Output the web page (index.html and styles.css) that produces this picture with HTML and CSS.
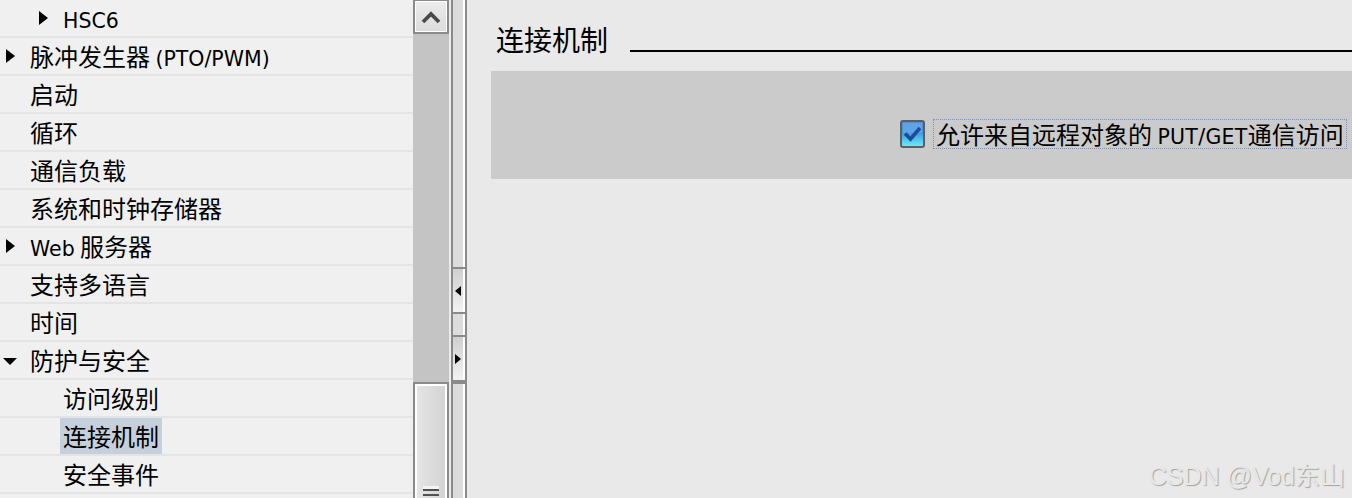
FILE: index.html
```html
<!DOCTYPE html>
<html lang="zh-CN">
<head>
<meta charset="utf-8">
<title>连接机制</title>
<link rel="stylesheet" href="styles.css">
</head>
<body>
<div class="app">
  <div class="tree">
    <div class="row l2"><span class="tw"><i class="arr-r"></i></span><span class="label"><span class="lat">HSC6</span></span></div>
    <div class="row l1"><span class="tw"><i class="arr-r"></i></span><span class="label">脉冲发生器 <span class="lat">(PTO/PWM)</span></span></div>
    <div class="row l1"><span class="tw"></span><span class="label">启动</span></div>
    <div class="row l1"><span class="tw"></span><span class="label">循环</span></div>
    <div class="row l1"><span class="tw"></span><span class="label">通信负载</span></div>
    <div class="row l1"><span class="tw"></span><span class="label">系统和时钟存储器</span></div>
    <div class="row l1"><span class="tw"><i class="arr-r"></i></span><span class="label"><span class="lat">Web</span> 服务器</span></div>
    <div class="row l1"><span class="tw"></span><span class="label">支持多语言</span></div>
    <div class="row l1"><span class="tw"></span><span class="label">时间</span></div>
    <div class="row l1"><span class="tw"><i class="arr-d"></i></span><span class="label">防护与安全</span></div>
    <div class="row l2"><span class="tw"></span><span class="label">访问级别</span></div>
    <div class="row l2"><span class="tw"></span><span class="label selected">连接机制</span></div>
    <div class="row l2"><span class="tw"></span><span class="label">安全事件</span></div>
  </div>

  <div class="vscroll">
    <div class="sb-up">
      <svg width="20" height="14" viewBox="0 0 20 14"><path d="M2 12 L10 4 L18 12" fill="none" stroke="#4a4a4a" stroke-width="3.8"/></svg>
    </div>
    <div class="sb-track"></div>
    <div class="sb-thumb"><span class="grip"></span></div>
  </div>

  <div class="gap"></div>

  <div class="splitter">
    <div class="sp-top"></div>
    <div class="sp-btn"><i class="arr-l"></i></div>
    <div class="sp-mid"></div>
    <div class="sp-btn"><i class="arr-r small"></i></div>
    <div class="sp-rest"></div>
  </div>

  <div class="content">
    <div class="heading">
      <span class="heading-title">连接机制</span>
      <span class="heading-rule"></span>
    </div>
    <div class="box">
      <div class="check-row">
        <svg class="checkbox" width="25" height="28" viewBox="0 0 25 28">
          <defs>
            <linearGradient id="cbg" x1="0" y1="0" x2="0" y2="1">
              <stop offset="0" stop-color="#4f8fdc"/>
              <stop offset="0.45" stop-color="#3f98e2"/>
              <stop offset="1" stop-color="#6cf0fb"/>
            </linearGradient>
          </defs>
          <rect x="1" y="1" width="23" height="26" rx="2" fill="url(#cbg)" stroke="#5e5e5e" stroke-width="2"/>
          <rect x="3" y="3" width="19" height="10" fill="#8ec0ee" opacity="0.35"/>
          <path d="M5 13.5 L10.5 19 L20 8" fill="none" stroke="#1b4d96" stroke-width="3.6"/>
        </svg>
        <span class="check-label">允许来自远程对象的 <span class="lat">PUT/GET</span>通信访问</span>
      </div>
    </div>
  </div>

  <div class="watermark">CSDN @Vod东山</div>
</div>
</body>
</html>
```

FILE: styles.css
```css
* { box-sizing: border-box; }

html, body {
  margin: 0;
  padding: 0;
  background: #e9e9e9;
}

.app {
  position: relative;
  display: flex;
  width: 1352px;
  height: 498px;
  overflow: hidden;
  font-family: "Noto Sans CJK SC", "DejaVu Sans", sans-serif;
  color: #000;
}

/* ---------- tree ---------- */
.tree {
  width: 413px;
  flex: 0 0 413px;
  background: #f0f0f0;
  display: flex;
  flex-direction: column;
}

.row {
  display: flex;
  align-items: center;
  height: 38px;
  flex: 0 0 38px;
  border-bottom: 2px solid #e4e4e4;
  font-size: 24px;
  line-height: 36px;
  white-space: nowrap;
}

.row.l1 { padding-left: 6px; }
.row.l2 { padding-left: 39px; }

.tw {
  width: 24px;
  flex: 0 0 24px;
  display: flex;
  align-items: center;
  height: 36px;
}

.arr-r {
  display: block;
  width: 0;
  height: 0;
  border-left: 9px solid #000;
  border-top: 7px solid transparent;
  border-bottom: 7px solid transparent;
}

.arr-d {
  display: block;
  width: 0;
  height: 0;
  margin-left: -3px;
  margin-top: 2px;
  border-top: 7px solid #000;
  border-left: 7px solid transparent;
  border-right: 7px solid transparent;
}

.label {
  display: inline-block;
  height: 36px;
  line-height: 36px;
}

.label.selected {
  background: #c5d0dc;
  padding: 0 3px;
  margin-left: -3px;
}

.lat {
  font-family: "DejaVu Sans", sans-serif;
  font-size: 20.5px;
}

/* ---------- vertical scrollbar ---------- */
.vscroll {
  width: 36px;
  flex: 0 0 36px;
  display: flex;
  flex-direction: column;
  background: #c4c4c4;
}

.sb-up {
  height: 34px;
  flex: 0 0 34px;
  border: 2px solid #8a8a8a;
  border-top-width: 1px;
  box-shadow: inset 1px 1px 0 #fff, inset -1px -1px 0 #fff;
  background: linear-gradient(#ececec, #dcdcdc);
  display: flex;
  align-items: center;
  justify-content: center;
}

.sb-track {
  flex: 1;
  background: #c4c4c4;
}

.sb-thumb {
  height: 116px;
  flex: 0 0 116px;
  border: 2px solid #8a8a8a;
  border-bottom: none;
  box-shadow: inset 2px 2px 0 #fff, inset -2px 0 0 #fff;
  background: linear-gradient(90deg, #e6e6e6, #d2d2d2);
  display: flex;
  align-items: flex-end;
  justify-content: center;
  padding-bottom: 2px;
}

.grip {
  display: block;
  width: 16px;
  height: 7px;
  border-top: 2px solid #505050;
  border-bottom: 2px solid #505050;
  box-shadow: 0 -3px 0 #f4f4f4;
}

.gap {
  width: 2px;
  flex: 0 0 2px;
  background: #ececec;
}

/* ---------- splitter ---------- */
.splitter {
  width: 16px;
  flex: 0 0 16px;
  border-left: 2px solid #8a8a8a;
  border-right: 2px solid #8a8a8a;
  background: #dcdcdc;
  box-shadow: inset -2px 0 0 #fff;
  display: flex;
  flex-direction: column;
}

.sp-top {
  height: 267px;
  flex: 0 0 267px;
}

.sp-mid {
  height: 21px;
  flex: 0 0 21px;
}

.sp-btn {
  height: 47px;
  flex: 0 0 47px;
  border-top: 2px solid #8a8a8a;
  border-bottom: 2px solid #8a8a8a;
  background: linear-gradient(#cfcfcf, #f2f2f2);
  box-shadow: inset -2px 0 0 #fff;
  display: flex;
  align-items: center;
  padding-left: 2px;
}

.sp-rest {
  flex: 1;
  border-top: 2px solid #8a8a8a;
}

.arr-l {
  display: block;
  width: 0;
  height: 0;
  border-right: 6px solid #000;
  border-top: 5px solid transparent;
  border-bottom: 5px solid transparent;
}

.arr-r.small {
  border-left-width: 6px;
  border-top-width: 5px;
  border-bottom-width: 5px;
}

/* ---------- content ---------- */
.content {
  flex: 1;
  background: #e9e9e9;
  padding-left: 24px;
  display: flex;
  flex-direction: column;
}

.heading {
  display: flex;
  align-items: flex-start;
  height: 71px;
  flex: 0 0 71px;
}

.heading-title {
  font-size: 28px;
  line-height: 30px;
  margin-top: 24px;
  padding-left: 5px;
  white-space: nowrap;
}

.heading-rule {
  flex: 1;
  height: 2px;
  background: #000;
  margin-top: 50px;
  margin-left: 22px;
}

.box {
  height: 108px;
  background: #cbcbcb;
  padding-left: 409px;
  padding-top: 49px;
}

.check-row {
  display: flex;
  align-items: center;
  white-space: nowrap;
  height: 30px;
  margin-top: -1px;
}

.checkbox {
  flex: 0 0 25px;
  display: block;
}

.check-label {
  margin-left: 8px;
  height: 30px;
  line-height: 28px;
  padding: 0 2px;
  border: 1px dotted #7f92bd;
  font-size: 24px;
}

.check-label .lat {
  font-size: 20.5px;
  letter-spacing: 0.3px;
}

.watermark {
  position: absolute;
  right: 7px;
  bottom: 7px;
  font-family: "Liberation Sans", "Noto Sans CJK SC", sans-serif;
  font-size: 25px;
  line-height: 30px;
  color: #e8e8e8;
  text-shadow: 1px 1px 1px rgba(0, 0, 0, 0.3);
  white-space: nowrap;
}
```
